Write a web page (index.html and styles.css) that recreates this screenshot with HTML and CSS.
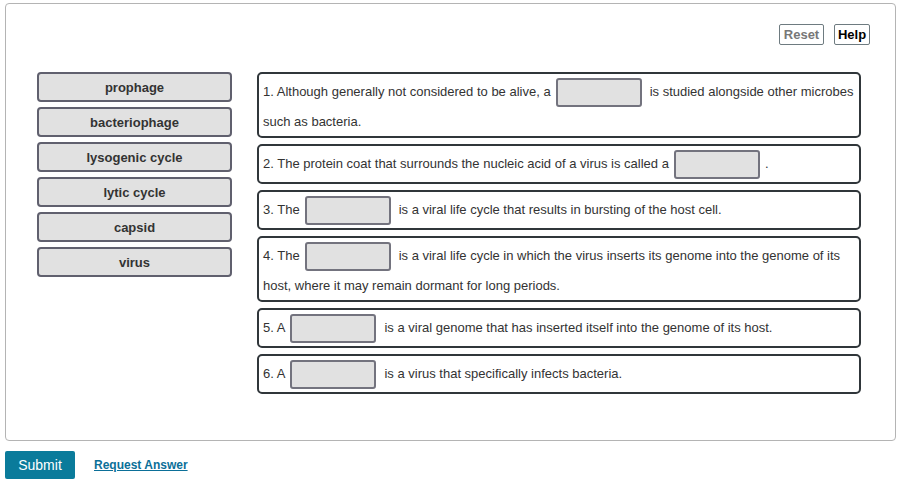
FILE: index.html
```html
<!DOCTYPE html>
<html>
<head>
<meta charset="utf-8">
<link rel="stylesheet" href="styles.css">
</head>
<body>
<div class="page">
  <div class="panel">
    <div class="toolbar">
      <button class="tbtn reset">Reset</button>
      <button class="tbtn help">Help</button>
    </div>
    <div class="main">
      <div class="tiles">
        <div class="tile">prophage</div>
        <div class="tile">bacteriophage</div>
        <div class="tile">lysogenic cycle</div>
        <div class="tile">lytic cycle</div>
        <div class="tile">capsid</div>
        <div class="tile">virus</div>
      </div>
      <div class="sentences">
        <div class="sent">1. Although generally not considered to be alive, a<span class="blank"></span>is studied alongside other microbes such as bacteria.</div>
        <div class="sent">2. The protein coat that surrounds the nucleic acid of a virus is called a<span class="blank b2"></span>.</div>
        <div class="sent">3. The<span class="blank"></span>is a viral life cycle that results in bursting of the host cell.</div>
        <div class="sent">4. The<span class="blank"></span>is a viral life cycle in which the virus inserts its genome into the genome of its host, where it may remain dormant for long periods.</div>
        <div class="sent">5. A<span class="blank"></span>is a viral genome that has inserted itself into the genome of its host.</div>
        <div class="sent">6. A<span class="blank"></span>is a virus that specifically infects bacteria.</div>
      </div>
    </div>
  </div>
  <div class="actions">
    <button class="submit">Submit</button>
    <a class="request" href="#">Request Answer</a>
  </div>
</div>
</body>
</html>
```
FILE: styles.css
```css
html, body {
  margin: 0;
  padding: 0;
  background: #ffffff;
  font-family: "Liberation Sans", Arial, sans-serif;
  color: #333333;
}

.page {
  padding: 3px 15px 0 5px;
}

.panel {
  border: 1px solid #b4b4b4;
  border-radius: 4px;
  padding: 20px 25px 46px 31px;
}

.toolbar {
  display: flex;
  justify-content: flex-end;
  gap: 10px;
  height: 21px;
}

.tbtn {
  font-family: "Liberation Sans", Arial, sans-serif;
  font-size: 13px;
  font-weight: bold;
  background: #ffffff;
  border: 1px solid #6e7b80;
  border-radius: 2px;
  padding: 0;
  height: 21px;
  line-height: 19px;
  margin: 0;
  text-align: center;
}

.reset {
  color: #777777;
  width: 45px;
}

.help {
  color: #000000;
  width: 36px;
}

.main {
  display: flex;
  gap: 25px;
  margin-top: 27px;
  align-items: flex-start;
}

.tiles {
  width: 195px;
  display: flex;
  flex-direction: column;
  gap: 5px;
}

.tile {
  box-sizing: border-box;
  height: 30px;
  background: #e1e1e1;
  border: 2px solid #60606e;
  border-radius: 4px;
  text-align: center;
  font-size: 13px;
  font-weight: bold;
  line-height: 25px;
  padding-top: 1px;
  color: #333333;
}

.sentences {
  width: 604px;
  display: flex;
  flex-direction: column;
  gap: 6px;
}

.sent {
  box-sizing: border-box;
  border: 2px solid #30363a;
  border-radius: 5px;
  padding: 2px 2px 1px 4px;
  font-size: 13px;
  line-height: 26px;
  color: #333333;
}

.blank {
  display: inline-block;
  box-sizing: border-box;
  width: 86px;
  height: 29px;
  background: #e1e1e1;
  border: 2px solid #73737e;
  border-radius: 3px;
  vertical-align: middle;
  margin: 2px 8px 2px 5px;
}

.blank.b2 {
  margin-right: 5px;
}

.actions {
  display: flex;
  align-items: center;
  gap: 19px;
  margin-top: 10px;
}

.submit {
  font-family: "Liberation Sans", Arial, sans-serif;
  font-size: 14px;
  color: #ffffff;
  background: #0a7b9b;
  border: none;
  border-radius: 2px;
  width: 70px;
  height: 28px;
  padding: 0;
  margin: 0;
}

.request {
  font-size: 12px;
  font-weight: bold;
  color: #0b6f98;
  text-decoration: underline;
}
```
